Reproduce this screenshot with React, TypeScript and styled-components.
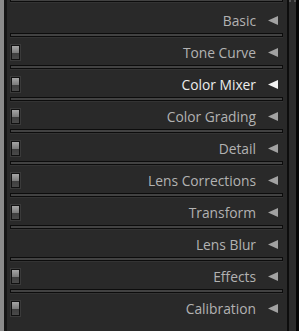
import styled, {createGlobalStyle} from "styled-components";

const GlobalStyle = createGlobalStyle`
  html, body {
    margin: 0;
    padding: 0;
    background: #111111;
  }
  body {
    font-family: "Open Sans", "Noto Sans", sans-serif;
  }
`;

const sections = [
  {name: "Basic", toggle: false},
  {name: "Tone Curve", toggle: true},
  {name: "Color Mixer", toggle: true, active: true},
  {name: "Color Grading", toggle: true},
  {name: "Detail", toggle: true},
  {name: "Lens Corrections", toggle: true},
  {name: "Transform", toggle: true},
  {name: "Lens Blur", toggle: false},
  {name: "Effects", toggle: true},
  {name: "Calibration", toggle: true},
];

const Frame = styled.div`
  display: flex;
  width: 299px;
  height: 331px;
  overflow: hidden;
`;

const EdgeLight = styled.div`
  width: 4px;
  background: #8c8c8c;
`;

const EdgeDark = styled.div<{$w: number; $color: string}>`
  width: ${({$w}) => $w}px;
  background: ${({$color}) => $color};
`;

const Scroller = styled.div`
  width: 7px;
  background: #2b2b2b;
  border-top: 2px dotted #555;
  box-sizing: border-box;
`;

const Panel = styled.div`
  flex: 1;
  background: #292929;
  display: flex;
  flex-direction: column;
`;

const Divider = styled.div<{$cut?: boolean}>`
  margin: 0 4px 0 3px;
  height: ${({$cut}) => ($cut ? 2 : 4)}px;
  box-sizing: border-box;
  border: 1px solid #0c0c0c;
  border-top: ${({$cut}) => ($cut ? "none" : "1px solid #0c0c0c")};
  background: #424242;
  box-shadow: 0 1px 0 #333333;
  flex-shrink: 0;
`;

const Gap = styled.div`
  height: 3px;
  flex-shrink: 0;
`;

const Header = styled.div`
  height: 28px;
  display: flex;
  align-items: center;
  padding: 0 9px 0 4px;
  flex-shrink: 0;
`;

const Toggle = styled.div`
  width: 9px;
  height: 15px;
  box-sizing: border-box;
  border: 1px solid #111;
  box-shadow: 0 0 0 1px #3a3a3a;
  background: linear-gradient(
    to bottom,
    #a6a6a6 0%,
    #7c7c7c 50%,
    #3e3e3e 52%,
    #4a4a4a 100%
  );
  margin-top: 2px;
`;

const Title = styled.span<{$active?: boolean}>`
  margin-left: auto;
  font-size: 13.8px;
  color: ${({$active}) => ($active ? "#ededed" : "#b2b2b2")};
  margin-right: 12px;
  padding-top: 2px;
`;

const ArrowBox = styled.svg`
  display: block;
  margin-top: 3px;
`;

const Arrow = ({active}: {active?: boolean}) => (
  <ArrowBox width="10" height="9" viewBox="0 0 10 9">
    <polygon points="0,4.5 10,0 10,9" fill={active ? "#f2f2f2" : "#a2a2a2"} />
  </ArrowBox>
);

export default function App() {
  return (
    <>
      <GlobalStyle />
      <Frame>
        <EdgeLight />
        <EdgeDark $w={3} $color="#161616" />
        <Panel>
          <Divider $cut />
          <Gap />
          {sections.map((s, i) => (
            <div key={s.name}>
              {i > 0 && <Divider />}
              <Header>
                {s.toggle && <Toggle />}
                <Title $active={s.active}>{s.name}</Title>
                <Arrow active={s.active} />
              </Header>
            </div>
          ))}
        </Panel>
        <EdgeDark $w={2} $color="#0d0d0d" />
        <Scroller />
        <EdgeDark $w={3} $color="#050505" />
      </Frame>
    </>
  );
}
